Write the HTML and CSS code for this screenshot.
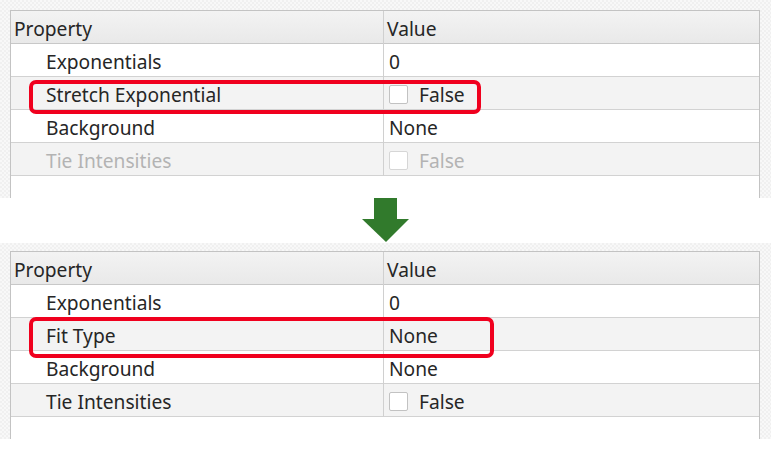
FILE: index.html
```html
<!DOCTYPE html>
<html>
<head>
<meta charset="utf-8">
<link rel="stylesheet" href="styles.css">
</head>
<body>
<div class="panel">
  <div class="frame">
    <div class="row head"><div class="c1">Property</div><div class="c2">Value</div></div>
    <div class="row"><div class="c1 name">Exponentials</div><div class="c2">0</div></div>
    <div class="row alt"><div class="c1 name">Stretch Exponential</div><div class="c2"><span class="cb"></span>False</div></div>
    <div class="row"><div class="c1 name">Background</div><div class="c2">None</div></div>
    <div class="row alt disabled"><div class="c1 name">Tie Intensities</div><div class="c2"><span class="cb"></span>False</div></div>
    <div class="hl hl-top"></div>
  </div>
</div>
<div class="arrow-wrap">
  <svg class="arrow" width="48" height="45" viewBox="0 0 48 45"><rect x="12" y="0" width="23" height="23" fill="#317a2c"/><polygon points="0,22 47,22 24,45" fill="#317a2c"/></svg>
</div>
<div class="panel panel2">
  <div class="frame">
    <div class="row head"><div class="c1">Property</div><div class="c2">Value</div></div>
    <div class="row"><div class="c1 name">Exponentials</div><div class="c2">0</div></div>
    <div class="row alt"><div class="c1 name">Fit Type</div><div class="c2">None</div></div>
    <div class="row"><div class="c1 name">Background</div><div class="c2">None</div></div>
    <div class="row alt"><div class="c1 name">Tie Intensities</div><div class="c2"><span class="cb"></span>False</div></div>
    <div class="hl hl-bottom"></div>
  </div>
</div>
</body>
</html>
```
FILE: styles.css
```css
html, body {
  margin: 0;
  padding: 0;
  background: #ffffff;
}
body {
  font-family: "Noto Sans", "Open Sans", sans-serif;
  font-size: 19.2px;
  color: #262626;
  width: 771px;
  height: 462px;
  overflow: hidden;
}
.panel {
  padding: 10px 11px 0 10px;
  background-color: #f4f4f4;
  background-image: repeating-conic-gradient(#f0f0f0 0 25%, #f8f8f8 0 50%);
  background-size: 4px 4px;
}
.panel2 {
  padding-top: 8px;
}
.frame {
  position: relative;
  height: 188px;
  box-sizing: border-box;
  border: 1px solid #c3c3c3;
  border-bottom: none;
  background: #ffffff;
}
.row {
  display: grid;
  grid-template-columns: 373px 1fr;
  height: 33px;
  box-sizing: border-box;
  border-bottom: 1px solid #d2d2d2;
  line-height: 31px;
}
.row.head {
  background: linear-gradient(#f3f3f3, #e9e9e9);
  border-bottom-color: #c8c8c8;
}
.row.alt {
  background: #f3f3f3;
}
.c1 {
  border-right: 1px solid #d0d0d0;
  padding-left: 3px;
  padding-top: 2px;
  white-space: nowrap;
}
.c1.name {
  padding-left: 35px;
}
.c2 {
  padding-left: 5px;
  padding-top: 2px;
  display: flex;
  align-items: center;
  white-space: nowrap;
}
.head .c2 {
  padding-left: 3px;
}
.cb {
  width: 17px;
  height: 17px;
  border: 1px solid #c2c2c2;
  border-radius: 2px;
  background: #ffffff;
  margin-right: 11px;
  flex: none;
}
.disabled {
  color: #b3b3b3;
}
.disabled .cb {
  border-color: #d6d6d6;
}
.hl {
  position: absolute;
  left: 18px;
  box-sizing: border-box;
  border: 4px solid #f0001e;
  border-radius: 7px;
}
.hl-top {
  top: 69px;
  width: 452px;
  height: 34px;
}
.hl-bottom {
  top: 65px;
  width: 465px;
  height: 41px;
}
.arrow-wrap {
  height: 45px;
  display: flex;
  justify-content: center;
  background: #ffffff;
}
.arrow {
  display: block;
  margin-top: -1px;
}
```
